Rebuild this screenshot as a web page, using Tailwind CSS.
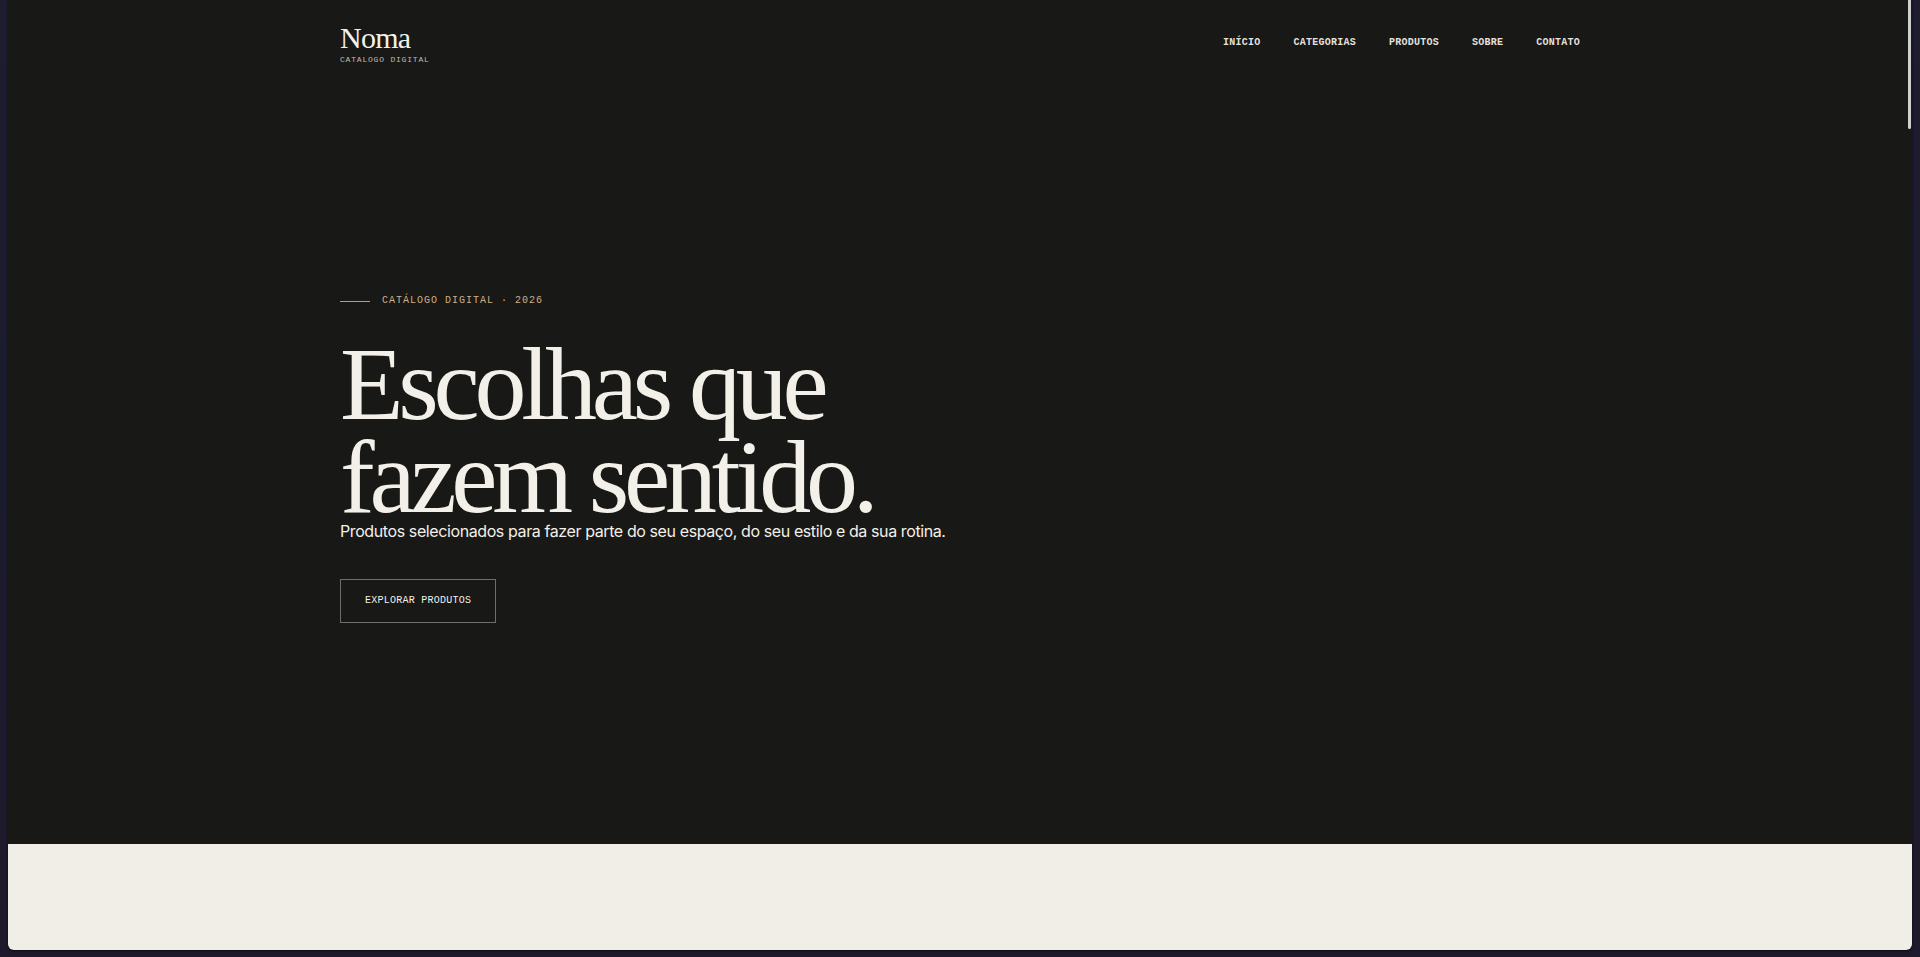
<!DOCTYPE html>
<html lang="pt-BR">
<head>
  <meta charset="UTF-8">
  <meta name="viewport" content="width=device-width, initial-scale=1.0">
  <title>Noma</title>
  <script src="https://cdn.jsdelivr.net/npm/@tailwindcss/browser@4"></script>
</head>
<body class="h-screen overflow-hidden bg-linear-to-b from-[#1e1c31] via-[#1b1b2e] to-[#1f1a2b] px-2 pb-[7px] font-['Inter',sans-serif]">

  <div class="relative flex h-full flex-col overflow-hidden rounded-b-md bg-[#f1eee7] shadow-sm shadow-black/50">

    <!-- Hero -->
    <div class="flex flex-1 flex-col bg-[#181816] px-8 text-[#f3f0e9]">

      <header class="mx-auto flex w-full max-w-[1240px] items-center justify-between pt-5">
        <a href="#" class="block">
          <span class="block font-['Liberation_Serif',serif] text-[30px] leading-9 tracking-tight">Noma</span>
          <span class="block font-['Liberation_Mono',monospace] text-[8px] leading-2 tracking-widest text-[#f3f0e9]/75">CATALOGO DIGITAL</span>
        </a>
        <nav class="flex gap-[33px] pt-0.5 font-['Liberation_Mono',monospace] text-[10px] leading-4 font-bold tracking-wide text-[#f3f0e9]/95">
          <a href="#inicio">INÍCIO</a>
          <a href="#categorias">CATEGORIAS</a>
          <a href="#produtos">PRODUTOS</a>
          <a href="#sobre">SOBRE</a>
          <a href="#contato">CONTATO</a>
        </nav>
      </header>

      <section id="inicio" class="mx-auto flex w-full max-w-[1240px] flex-1 flex-col items-start justify-center pt-2">
        <p class="flex items-center gap-3 font-['Liberation_Mono',monospace] text-[10px] leading-4 tracking-widest text-[#cfb08a]">
          <span class="h-px w-[30px] bg-[#b89b78]"></span>
          CATÁLOGO DIGITAL · 2026
        </p>
        <h1 class="mt-7 font-['Liberation_Serif',serif] text-[104px] leading-[93px] tracking-tighter">Escolhas que<br>fazem sentido.</h1>
        <p class="-mt-1 text-base leading-6 tracking-tight">Produtos selecionados para fazer parte do seu espaço, do seu estilo e da sua rotina.</p>
        <a href="#produtos" class="mt-9 flex h-11 items-center border border-[#f3f0e9]/40 px-6 font-['Liberation_Mono',monospace] text-[10px] leading-4 tracking-wide">EXPLORAR PRODUTOS</a>
      </section>
    </div>

    <!-- Next section -->
    <section id="categorias" class="h-[106px]"></section>

    <!-- Scroll thumb -->
    <div class="absolute top-0 right-px h-[129px] w-[3px] rounded-b-sm bg-[#d0d0ce]"></div>
  </div>

</body>
</html>
